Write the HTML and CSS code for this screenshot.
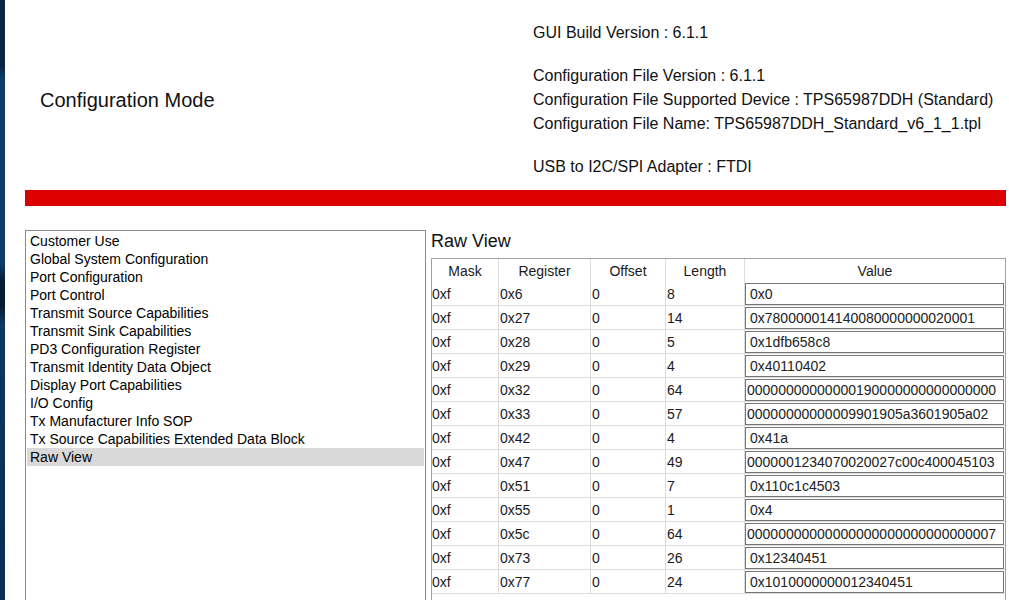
FILE: index.html
```html
<!DOCTYPE html>
<html lang="en">
<head>
  <meta charset="UTF-8">
  <title>Configuration Mode</title>
  <link rel="stylesheet" href="styles.css">
</head>
<body>
  <div class="desk"></div>
  <div class="window">
    <header class="top">
      <div class="mode">Configuration Mode</div>
      <div class="info">
        <div class="group">GUI Build Version : 6.1.1</div>
        <div class="group">
          Configuration File Version : 6.1.1<br>
          Configuration File Supported Device : TPS65987DDH (Standard)<br>
          Configuration File Name: TPS65987DDH_Standard_v6_1_1.tpl
        </div>
        <div class="group">USB to I2C/SPI Adapter : FTDI</div>
      </div>
    </header>
    <div class="redbar"></div>
    <div class="content">
      <ul class="nav">
        <li>Customer Use</li>
        <li>Global System Configuration</li>
        <li>Port Configuration</li>
        <li>Port Control</li>
        <li>Transmit Source Capabilities</li>
        <li>Transmit Sink Capabilities</li>
        <li>PD3 Configuration Register</li>
        <li>Transmit Identity Data Object</li>
        <li>Display Port Capabilities</li>
        <li>I/O Config</li>
        <li>Tx Manufacturer Info SOP</li>
        <li>Tx Source Capabilities Extended Data Block</li>
        <li class="active">Raw View</li>
      </ul>
      <section class="raw">
        <h2>Raw View</h2>
        <div class="grid-box">
          <table class="regs">
            <colgroup>
              <col class="c-mask"><col class="c-reg"><col class="c-off"><col class="c-len"><col>
            </colgroup>
            <thead>
              <tr><th>Mask</th><th>Register</th><th>Offset</th><th>Length</th><th>Value</th></tr>
            </thead>
            <tbody>
              <tr><td>0xf</td><td>0x6</td><td>0</td><td>8</td><td class="val"><div class="field">0x0</div></td></tr>
              <tr><td>0xf</td><td>0x27</td><td>0</td><td>14</td><td class="val"><div class="field">0x780000014140080000000020001</div></td></tr>
              <tr><td>0xf</td><td>0x28</td><td>0</td><td>5</td><td class="val"><div class="field">0x1dfb658c8</div></td></tr>
              <tr><td>0xf</td><td>0x29</td><td>0</td><td>4</td><td class="val"><div class="field">0x40110402</div></td></tr>
              <tr><td>0xf</td><td>0x32</td><td>0</td><td>64</td><td class="val"><div class="field long">00000000000000190000000000000000</div></td></tr>
              <tr><td>0xf</td><td>0x33</td><td>0</td><td>57</td><td class="val"><div class="field long">00000000000009901905a3601905a02</div></td></tr>
              <tr><td>0xf</td><td>0x42</td><td>0</td><td>4</td><td class="val"><div class="field">0x41a</div></td></tr>
              <tr><td>0xf</td><td>0x47</td><td>0</td><td>49</td><td class="val"><div class="field long">0000001234070020027c00c400045103</div></td></tr>
              <tr><td>0xf</td><td>0x51</td><td>0</td><td>7</td><td class="val"><div class="field">0x110c1c4503</div></td></tr>
              <tr><td>0xf</td><td>0x55</td><td>0</td><td>1</td><td class="val"><div class="field">0x4</div></td></tr>
              <tr><td>0xf</td><td>0x5c</td><td>0</td><td>64</td><td class="val"><div class="field long">00000000000000000000000000000007</div></td></tr>
              <tr><td>0xf</td><td>0x73</td><td>0</td><td>26</td><td class="val"><div class="field">0x12340451</div></td></tr>
              <tr><td>0xf</td><td>0x77</td><td>0</td><td>24</td><td class="val"><div class="field">0x1010000000012340451</div></td></tr>
            </tbody>
          </table>
        </div>
      </section>
    </div>
  </div>
</body>
</html>
```

FILE: styles.css
```css
body {
  margin: 0;
  height: 600px;
  overflow: hidden;
  display: flex;
  font-family: "Liberation Sans", Arial, sans-serif;
  color: #111;
  background: #fff;
}
.desk {
  width: 5px;
  flex-shrink: 0;
  background: linear-gradient(180deg, #0a2542 0%, #0a2542 11%, #0f3c66 13%, #0f3c66 44%, #071c33 47%, #071c33 51%, #0e3860 54%, #0b2d50 100%);
}
.window {
  flex: 1;
  padding: 0 3px 0 20px;
}
.top {
  display: flex;
  align-items: center;
  padding-top: 21px;
}
.mode {
  width: 508px;
  padding-left: 15px;
  box-sizing: border-box;
  font-size: 20px;
}
.info {
  font-size: 16px;
  line-height: 24px;
}
.info .group + .group { margin-top: 19px; }
.redbar {
  margin-top: 11px;
  height: 16px;
  background: #dd0000;
}
.content {
  margin-top: 24px;
  display: flex;
  gap: 5px;
  height: 370px;
}
.nav {
  list-style: none;
  margin: 0;
  padding: 1px;
  width: 401px;
  box-sizing: border-box;
  border: 1px solid #8a8a8a;
  border-bottom: none;
  font-size: 14px;
  line-height: 18px;
  color: #000;
}
.nav li { padding-left: 3px; }
.nav li.active { background: #d9d9d9; }
.raw { flex: 1; display: flex; flex-direction: column; }
.raw h2 {
  margin: 0 0 6px 0;
  font-size: 18px;
  font-weight: normal;
  line-height: 22px;
}
.grid-box {
  flex: 1;
  border: 1px solid #a0a0a0;
  border-bottom: none;
}
.regs {
  width: 100%;
  table-layout: fixed;
  border-collapse: separate;
  border-spacing: 0;
  font-size: 14px;
  color: #1a1a1a;
}
.c-mask { width: 67px; }
.c-reg { width: 92px; }
.c-off { width: 75px; }
.c-len { width: 79px; }
.regs th, .regs td {
  padding: 0 1px;
  height: 23px;
  border-right: 1px solid #dcdcdc;
  border-bottom: 1px solid #dcdcdc;
  text-align: left;
  white-space: nowrap;
}
.regs td:first-child { padding-left: 0; }
.regs th {
  height: 23px;
  border-bottom: none;
  font-weight: normal;
  text-align: center;
}
.regs th:last-child, .regs td:last-child { border-right: none; }
.regs td.val { padding: 0 1px 0 0; }
.field {
  height: 20px;
  line-height: 20px;
  border: 1px solid #767676;
  padding: 0 4px;
  overflow: hidden;
  white-space: nowrap;
  color: #222;
}
.field.long {
  padding: 0 0 0 1px;
}
```
